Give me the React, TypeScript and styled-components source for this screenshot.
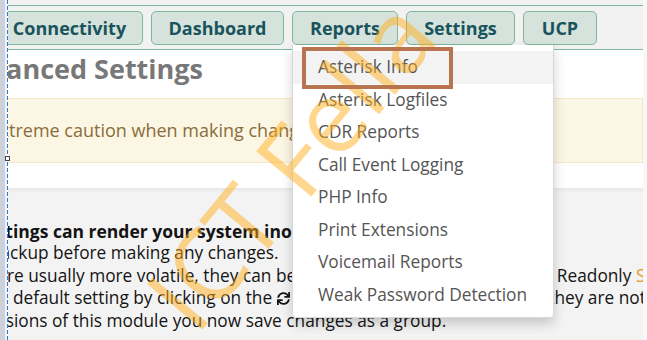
import React from 'react';
import styled, {createGlobalStyle} from 'styled-components';
import {FaSync} from 'react-icons/fa';

const GlobalStyle = createGlobalStyle`
  html, body {
    margin: 0;
    padding: 0;
  }
  body {
    font-family: "Open Sans", "Liberation Sans", sans-serif;
    background: #ffffff;
    overflow: hidden;
  }
`

// button widths follow the module tab sizes of the reference
const navItems = [
    {label: 'Connectivity', width: 147},
    {label: 'Dashboard', width: 133},
    {label: 'Reports', width: 106},
    {label: 'Settings', width: 109},
    {label: 'UCP', width: 74},
]

const reportItems = [
    'Asterisk Info',
    'Asterisk Logfiles',
    'CDR Reports',
    'Call Event Logging',
    'PHP Info',
    'Print Extensions',
    'Voicemail Reports',
    'Weak Password Detection',
]

export default function App() {
    return (
        <>
            <GlobalStyle/>
            <Frame>
                <Gutter/>
                <GutterGap/>
                <DashLine/>
                <Viewport>
                    <TopStrip/>
                    <NavBar>
                        <NavTrack>
                            {navItems.map(item =>
                                <NavButton key={item.label} $width={item.width}>{item.label}</NavButton>
                            )}
                        </NavTrack>
                    </NavBar>
                    <Title>Advanced Settings</Title>
                    <Alert>Use extreme caution when making changes!</Alert>
                    <Body>
                        <BodyLine $bold>Some of these settings can render your system inoperable.</BodyLine>
                        <BodyLine>You are urged to backup before making any changes.</BodyLine>
                        <BodyLine>
                            Readonly settings are usually more volatile, they can be changed by changing "Override Readonly <Warn>Settings"</Warn> to true.
                        </BodyLine>
                        <BodyLine>
                            You can restore the default setting by clicking on the <RefreshIcon/> icon to the right of the values if they are not set to default.
                        </BodyLine>
                        <BodyLine>Unlike previous versions of this module you now save changes as a group.</BodyLine>
                    </Body>
                    <Dropdown>
                        {reportItems.map((item, i) =>
                            <MenuItem key={item} $active={i === 0}>{item}</MenuItem>
                        )}
                    </Dropdown>
                    <Watermark>ICT Fella</Watermark>
                    <Annotation/>
                </Viewport>
                <RightEdge/>
                <Handle/>
            </Frame>
        </>
    )
}

const Frame = styled.div`
  position: relative;
  display: flex;
  width: 647px;
  height: 340px;
  overflow: hidden;
`
const Gutter = styled.div`
  flex-shrink: 0;
  width: 5px;
  background: #cdd1da;
`
const GutterGap = styled.div`
  flex-shrink: 0;
  width: 2px;
  background: #f1f2f4;
`
const DashLine = styled.div`
  flex-shrink: 0;
  width: 1px;
  background: repeating-linear-gradient(to bottom, #2d74d9 0 4px, #ffffff 4px 6px);
`
const Viewport = styled.div`
  position: relative;
  flex: 1;
  overflow: hidden;
  background: #ffffff;
`
const RightEdge = styled.div`
  flex-shrink: 0;
  width: 4px;
  background: #f8f8f8;
`
const Handle = styled.div`
  position: absolute;
  left: 5px;
  top: 156px;
  width: 3px;
  height: 3px;
  border: 1px solid #444444;
  background: #ffffff;
`
const TopStrip = styled.div`
  height: 5px;
  background: #f2f2f2;
  border-bottom: 1px solid #7db89b;
`
const NavBar = styled.div`
  height: 43px;
  background: #f2f2f2;
  border-bottom: 1px solid #7db89b;
`
const NavTrack = styled.div`
  display: flex;
  gap: 8px;
  padding-top: 5px;
  margin-left: -12px;
`
const NavButton = styled.div<{ $width: number }>`
  flex-shrink: 0;
  box-sizing: border-box;
  width: ${p => p.$width}px;
  height: 34px;
  line-height: 32px;
  text-align: center;
  border: 1px solid #7fb79c;
  border-radius: 5px;
  background: #d5e3dc;
  color: #19535c;
  font-weight: 700;
  font-size: 18px;
  white-space: nowrap;
`
const Title = styled.h1`
  margin: 0 0 0 -53px;
  font-size: 27px;
  font-weight: 700;
  line-height: normal;
  color: #787878;
  white-space: nowrap;
`
const Alert = styled.div`
  margin: 11px 0 0 -70px;
  padding: 20px 17px 20px 14px;
  background: #fcf6e4;
  border: 1px solid #f6e7c7;
  color: #8a6d3b;
  font-size: 18px;
  line-height: 23px;
  white-space: nowrap;
`
const Body = styled.div`
  margin-top: 25px;
  height: 200px;
  padding-top: 32px;
  background: #f3f3f3;
  box-shadow: inset 0 4px 4px -2px rgba(0, 0, 0, 0.06);
`
const BodyLine = styled.div<{ $bold?: boolean }>`
  margin-left: -157px;
  font-size: ${p => p.$bold ? '17.5px' : '17.3px'};
  line-height: 22.4px;
  font-weight: ${p => p.$bold ? 700 : 400};
  color: #141414;
  white-space: nowrap;
`
const Warn = styled.span`
  color: #e39a1b;
`
const RefreshIcon = styled(FaSync)`
  width: 13px;
  height: 13px;
  vertical-align: -1px;
  color: #141414;
`
const Dropdown = styled.div`
  position: absolute;
  left: 284px;
  top: 45px;
  z-index: 2;
  width: 260px;
  padding: 6px 0;
  background: #ffffff;
  border: 1px solid rgba(0, 0, 0, 0.15);
  border-top: none;
  border-radius: 0 0 4px 4px;
  box-shadow: 0 6px 12px rgba(0, 0, 0, 0.18);
`
const MenuItem = styled.div<{ $active?: boolean }>`
  padding-left: 25px;
  line-height: 32.5px;
  font-size: 17.3px;
  color: #555555;
  white-space: nowrap;
  background: ${p => p.$active ? '#f3f3f3' : 'transparent'};
`
const Watermark = styled.div`
  position: absolute;
  left: 188px;
  top: 248px;
  z-index: 3;
  font-size: 100px;
  line-height: 1;
  color: rgba(255, 176, 30, 0.5);
  white-space: nowrap;
  transform-origin: 0 88.8px;
  transform: rotate(-50.6deg);
  pointer-events: none;
`
const Annotation = styled.div`
  position: absolute;
  left: 294px;
  top: 47px;
  z-index: 4;
  box-sizing: border-box;
  width: 151px;
  height: 42px;
  border: 4px solid #b8734f;
`
